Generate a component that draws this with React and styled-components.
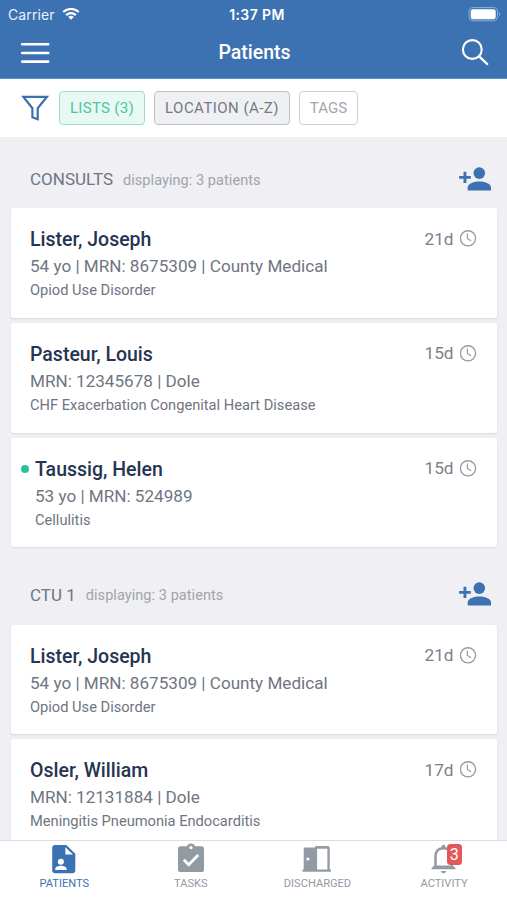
import React from "react";
import styled, { createGlobalStyle } from "styled-components";

const GlobalStyle = createGlobalStyle`
  * { box-sizing: border-box; }
  body { margin: 0; background: #efeff4; }
`;

const Screen = styled.div`
  width: 507px;
  height: 900px;
  overflow: hidden;
  display: flex;
  flex-direction: column;
  background: #efeff4;
  font-family: Roboto, sans-serif;
  white-space: nowrap;
`;

const Header = styled.header`
  flex: none;
  height: 79px;
  background: #3c72b2;
  color: #fff;
  border-bottom: 1px solid #5c91cb;
`;

const StatusBar = styled.div`
  display: grid;
  grid-template-columns: 1fr auto 1fr;
  align-items: center;
  height: 28px;
  padding: 0 6px 0 8px;
  font-family: Inter, sans-serif;
`;

const Carrier = styled.span`
  display: flex;
  align-items: center;
  gap: 7px;
  color: #e9f1fa;
  font-size: 14px;
  letter-spacing: 0.1px;
`;

const Time = styled.span`
  padding-left: 5px;
  font-size: 14px;
  font-weight: 600;
  letter-spacing: 0.4px;
`;

const BatterySlot = styled.span`
  display: flex;
  justify-content: flex-end;
`;

const NavBar = styled.div`
  display: grid;
  grid-template-columns: 1fr auto 1fr;
  align-items: center;
  height: 50px;
  padding: 0 18px 0 20px;
`;

const Title = styled.h1`
  margin: 0;
  font-size: 19.5px;
  font-weight: 500;
  line-height: 24px;
`;

const IconButton = styled.button`
  display: flex;
  justify-self: ${(p) => (p.$end ? "end" : "start")};
  padding: 0;
  border: 0;
  background: none;
  color: inherit;
`;

const FilterBar = styled.div`
  flex: none;
  display: flex;
  align-items: center;
  height: 58px;
  padding: 0 21px;
  background: #fff;
`;

const FilterIcon = styled.span`
  display: flex;
  margin-right: 10px;
`;

const chipTones = {
  green: "color: #4bc79d; background: #e8f8f4; border-color: #9edfc9;",
  gray: "color: #747a84; background: #eff0f2; border-color: #bfc3c8;",
  plain: "color: #a2a7ad; background: #fff; border-color: #ced2d6;",
};

const Chip = styled.button`
  width: ${(p) => p.$width}px;
  height: 34px;
  margin-right: 9px;
  padding: 1px 0 0;
  border: 1px solid;
  border-radius: 4px;
  font: 400 15px/31px Roboto, sans-serif;
  letter-spacing: ${(p) => p.$spacing}px;
  ${(p) => chipTones[p.$tone]}
`;

const List = styled.main`
  flex: 1;
  min-height: 0;
  overflow: hidden;
  padding: 0 10px 0 11px;
`;

const SectionHeader = styled.div`
  display: flex;
  align-items: center;
  height: ${(p) => p.$height}px;
  padding: 13px 6px 0 19px;
`;

const SectionName = styled.h2`
  margin: 0 10px 0 0;
  color: #6f7582;
  font-size: 17px;
  font-weight: 400;
`;

const SectionCount = styled.span`
  flex: 1;
  padding-top: 2px;
  color: #a0a4ab;
  font-size: 14.5px;
  letter-spacing: 0.06px;
`;

const Card = styled.article`
  display: flex;
  justify-content: space-between;
  height: 109.7px;
  margin-bottom: 5px;
  padding: 18px 20.5px 0 ${(p) => (p.$unread ? 10 : 19)}px;
  border-radius: 3px;
  background: #fff;
  box-shadow: 0 1px 2px rgba(60, 65, 80, 0.12);
`;

const UnreadDot = styled.span`
  flex: none;
  width: 8px;
  height: 8px;
  margin: 9px 6px 0 0;
  border-radius: 50%;
  background: #2cbf9c;
`;

const Details = styled.div`
  flex: 1;
  padding-top: 1px;
`;

const Name = styled.h3`
  margin: 0;
  color: #263450;
  font-size: 19.5px;
  font-weight: 500;
  line-height: 26px;
`;

const Meta = styled.div`
  color: #6f7582;
  font-size: 17.1px;
  line-height: 26px;
`;

const Diagnosis = styled.div`
  color: #6f7582;
  font-size: 14.65px;
  line-height: 22px;
`;

const Stay = styled.div`
  display: flex;
  align-items: center;
  gap: 6px;
  height: 25px;
  color: #7b818c;
  font-size: 17.2px;
`;

const TabBar = styled.nav`
  flex: none;
  display: grid;
  grid-template-columns: repeat(4, 126.6px);
  height: 60px;
  border-top: 1px solid #dcdde2;
  background: #fff;
`;

const Tab = styled.a`
  display: flex;
  flex-direction: column;
  align-items: center;
  padding-left: 2px;
  color: ${(p) => (p.$active ? "#3a72b4" : "#929aa4")};
`;

const TabIcon = styled.span`
  position: relative;
  display: flex;
  width: 34px;
  height: 34px;
`;

const TabLabel = styled.span`
  padding-top: 2px;
  font-size: 11.1px;
  line-height: 14px;
`;

const Badge = styled.span`
  position: absolute;
  left: 20px;
  top: 3px;
  width: 14.5px;
  height: 21px;
  border-radius: 3.5px;
  background: #e3585b;
  color: #fff;
  font-size: 16px;
  line-height: 21px;
  text-align: center;
`;

const WifiIcon = () => (
  <svg width="18" height="13" viewBox="0 0.8 18 13" fill="none" stroke="#fff" strokeWidth="2.2">
    <path d="M1.2 4.8C5.5.8 12.5.8 16.8 4.8" />
    <path d="M4.2 7.9C6.9 5.2 11.1 5.2 13.8 7.9" />
    <path d="M9 12.6L6.2 9.8Q9 7.5 11.8 9.8Z" fill="#fff" stroke="none" />
  </svg>
);

const BatteryIcon = () => (
  <svg width="33" height="15" viewBox="0 0.8 33 15">
    <rect x="1" y="1.4" width="28.5" height="13.2" rx="4" fill="none" stroke="#8eb1da" />
    <rect x="2.7" y="3" width="25" height="10" rx="2.2" fill="#fff" />
    <path d="M31 5.9Q33 8 31 10.1Z" fill="#8eb1da" />
  </svg>
);

const MenuIcon = () => (
  <svg width="30" height="22" viewBox="0 0 30 22" stroke="#fff" strokeWidth="2.6" strokeLinecap="round">
    <path d="M2.2 2.3H28.2M2.2 11H28.2M2.2 19.6H28.2" />
  </svg>
);

const SearchIcon = () => (
  <svg width="29" height="28" viewBox="0 0 29 28" fill="none" stroke="#fff" strokeWidth="2.1" strokeLinecap="round">
    <circle cx="12.3" cy="10.5" r="9.4" />
    <path d="M19.1 17.3L27.2 25" strokeWidth="2.4" />
  </svg>
);

const FunnelIcon = () => (
  <svg width="28" height="26" viewBox="0 0 28 26" fill="none" stroke="#3a6fb1" strokeWidth="2.2" strokeLinejoin="miter">
    <path d="M2.4 1.9H25.9L16.7 13.2V24.2L11.4 22.2V13.2Z" />
  </svg>
);

const AddPersonIcon = () => (
  <svg width="33" height="25" viewBox="0 0.4 33 25" fill="#3c72b2">
    <circle cx="21.3" cy="6.5" r="5.8" />
    <path d="M9.7 24V20.8C9.7 17 16.5 15 21.3 15S33 17 33 20.8V24Z" />
    <path d="M5.5 5.2H8.4V9.4H12.8V12.1H8.4V16.5H5.5V12.1H1.1V9.4H5.5Z" />
  </svg>
);

const ClockIcon = () => (
  <svg width="17" height="17" viewBox="0 0 17 17" fill="none" stroke="#979ca4" strokeLinecap="round">
    <circle cx="8" cy="8.3" r="7.6" strokeWidth="1.4" />
    <path d="M7.4 3.9V8.5L10.7 10.5" strokeWidth="1.2" />
  </svg>
);

const PatientFileIcon = () => (
  <svg width="34" height="34" viewBox="0 0 34 34">
    <path d="M8.2 4H19.3L28.3 12.8V29.3Q28.3 32.3 25.3 32.3H8.2Q5.2 32.3 5.2 29.3V7Q5.2 4 8.2 4Z" fill="currentColor" />
    <path d="M18.4 6.2V13.6H26Z" fill="#fff" />
    <circle cx="13.9" cy="20.8" r="3" fill="#fff" />
    <path d="M8.2 29V27.9C8.2 25.8 11.5 24.7 13.9 24.7S19.6 25.8 19.6 27.9V29Z" fill="#fff" />
  </svg>
);

const TasksIcon = () => (
  <svg width="34" height="34" viewBox="0 0 34 34">
    <path d="M6.7 5.3H13C13.5 3.6 15 2.6 17 2.6S20.5 3.6 21 5.3H27.3Q30 5.3 30 8V28.4Q30 31.1 27.3 31.1H6.7Q4 31.1 4 28.4V8Q4 5.3 6.7 5.3Z" fill="currentColor" />
    <circle cx="17" cy="6.7" r="1.6" fill="#fff" />
    <path d="M9.8 18.8L14.7 23.7L24.2 14.1" fill="none" stroke="#fff" strokeWidth="2.8" />
  </svg>
);

const DoorIcon = () => (
  <svg width="34" height="34" viewBox="0.5 0 34 34">
    <path d="M4.2 7.7Q4.2 6.5 5.4 6.5H15.6V5.7Q15.6 4.9 16.5 4.9H28Q30.2 4.9 30.2 7.1V28.5H31.3V30.8H3V28.5H4.2Z" fill="currentColor" />
    <path d="M17.6 7.7H27.9V28.5H17.6Z" fill="#fff" />
    <circle cx="8.4" cy="18" r="1.6" fill="#fff" />
  </svg>
);

const BellIcon = () => (
  <svg width="34" height="34" viewBox="-0.5 0 34 34">
    <path d="M8 26V15.8C8 10.6 10.4 7.2 16 7.2S24.2 10.6 24.2 15.8V26" fill="none" stroke="currentColor" strokeWidth="2.5" />
    <path d="M14 7.8V5.8Q14 3.8 16 3.8T18 5.8V7.8ZM4 28.2V27L6.8 24.5H25.2L28 27V28.2ZM13.2 30H18.8Q18 32.2 16 32.2T13.2 30Z" fill="currentColor" />
  </svg>
);

const sections = [
  {
    name: "CONSULTS",
    height: 71.3,
    patients: [
      { name: "Lister, Joseph", meta: "54 yo | MRN: 8675309 | County Medical", diagnosis: "Opiod Use Disorder", stay: "21d" },
      { name: "Pasteur, Louis", meta: "MRN: 12345678 | Dole", diagnosis: "CHF Exacerbation Congenital Heart Disease", stay: "15d" },
      { name: "Taussig, Helen", meta: "53 yo | MRN: 524989", diagnosis: "Cellulitis", stay: "15d", unread: true },
    ],
  },
  {
    name: "CTU 1",
    height: 72.2,
    patients: [
      { name: "Lister, Joseph", meta: "54 yo | MRN: 8675309 | County Medical", diagnosis: "Opiod Use Disorder", stay: "21d" },
      { name: "Osler, William", meta: "MRN: 12131884 | Dole", diagnosis: "Meningitis Pneumonia Endocarditis", stay: "17d" },
    ],
  },
];

const tabs = [
  { label: "PATIENTS", Icon: PatientFileIcon, active: true },
  { label: "TASKS", Icon: TasksIcon },
  { label: "DISCHARGED", Icon: DoorIcon },
  { label: "ACTIVITY", Icon: BellIcon, badge: 3 },
];

const PatientCard = ({ patient }) => (
  <Card $unread={patient.unread}>
    {patient.unread && <UnreadDot />}
    <Details>
      <Name>{patient.name}</Name>
      <Meta>{patient.meta}</Meta>
      <Diagnosis>{patient.diagnosis}</Diagnosis>
    </Details>
    <Stay>
      {patient.stay}
      <ClockIcon />
    </Stay>
  </Card>
);

export default function App() {
  return (
    <Screen>
      <GlobalStyle />
      <Header>
        <StatusBar>
          <Carrier>Carrier <WifiIcon /></Carrier>
          <Time>1:37 PM</Time>
          <BatterySlot><BatteryIcon /></BatterySlot>
        </StatusBar>
        <NavBar>
          <IconButton aria-label="Menu"><MenuIcon /></IconButton>
          <Title>Patients</Title>
          <IconButton $end aria-label="Search"><SearchIcon /></IconButton>
        </NavBar>
      </Header>
      <FilterBar>
        <FilterIcon><FunnelIcon /></FilterIcon>
        <Chip $tone="green" $width={86} $spacing={0.3}>LISTS (3)</Chip>
        <Chip $tone="gray" $width={136} $spacing={0.45}>LOCATION (A-Z)</Chip>
        <Chip $tone="plain" $width={59} $spacing={0.1}>TAGS</Chip>
      </FilterBar>
      <List>
        {sections.map((section) => (
          <section key={section.name}>
            <SectionHeader $height={section.height}>
              <SectionName>{section.name}</SectionName>
              <SectionCount>displaying: 3 patients</SectionCount>
              <IconButton $end aria-label="Add patient"><AddPersonIcon /></IconButton>
            </SectionHeader>
            {section.patients.map((patient) => (
              <PatientCard key={patient.name} patient={patient} />
            ))}
          </section>
        ))}
      </List>
      <TabBar>
        {tabs.map(({ label, Icon, active, badge }) => (
          <Tab key={label} $active={active}>
            <TabIcon>
              <Icon />
              {badge && <Badge>{badge}</Badge>}
            </TabIcon>
            <TabLabel>{label}</TabLabel>
          </Tab>
        ))}
      </TabBar>
    </Screen>
  );
}
